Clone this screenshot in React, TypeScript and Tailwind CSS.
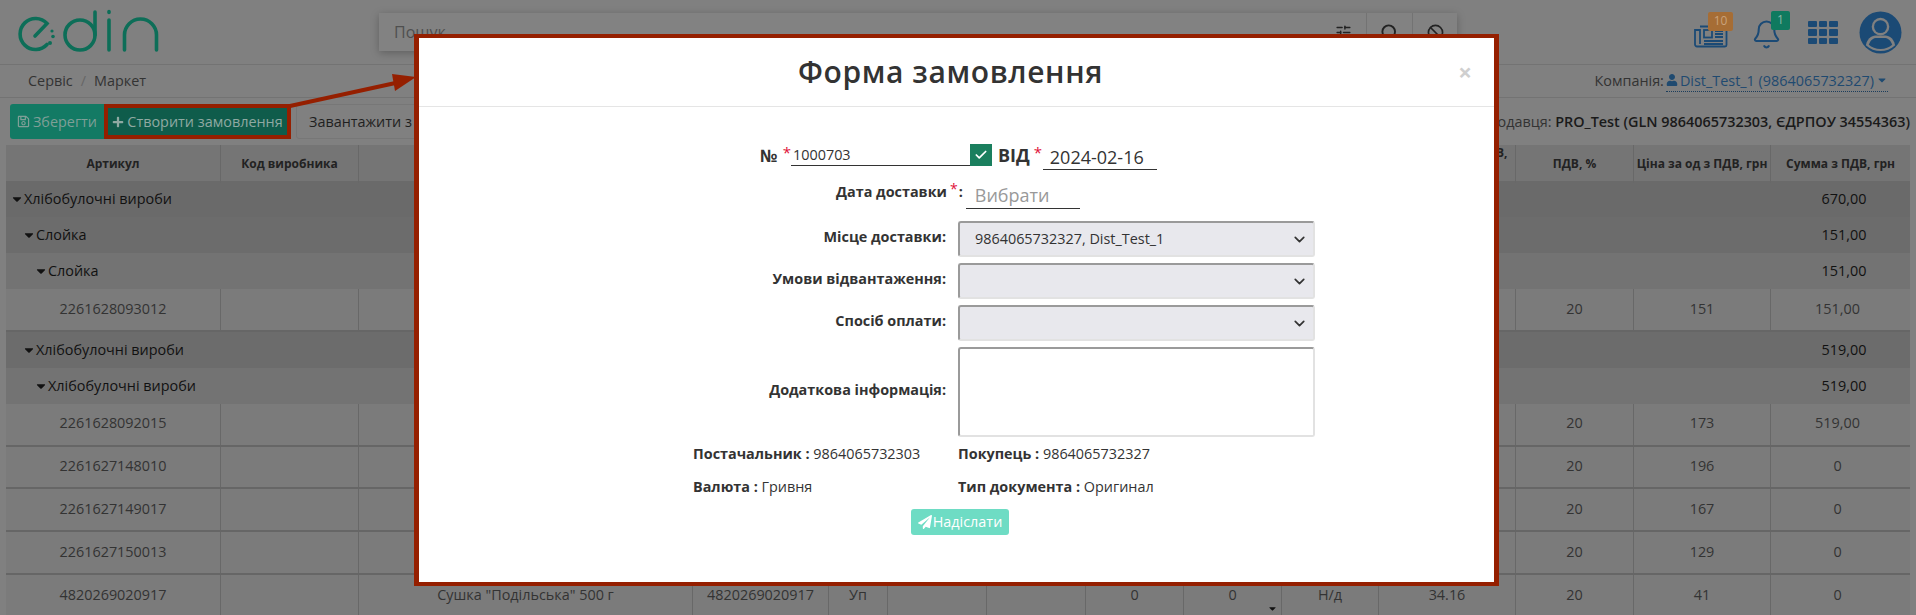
import { Ban, Bell, Check, ChevronDown, Search, SlidersHorizontal } from "lucide-react";
import { FaCaretDown, FaPaperPlane, FaPlus, FaRegSave, FaUser } from "react-icons/fa";
import type { ReactNode } from "react";

const columns = "grid grid-cols-[215px_138px_334px_136px_59px_99px_99px_98px_98px_97px_137px_118px_137px_139px]";

const headers = [
  "Артикул",
  "Код виробника",
  "Найменування",
  "Штрихкод",
  "Од",
  "",
  "",
  "",
  "",
  "",
  "Ціна за од без ПДВ, грн",
  "ПДВ, %",
  "Ціна за од з ПДВ, грн",
  "Сумма з ПДВ, грн",
];

type Row =
  | { kind: "group"; level: 0 | 1 | 2; title: string; total: string }
  | { kind: "data"; code: string; name: string; price: string; priceVat: string; sum: string };

const rows: Row[] = [
  { kind: "group", level: 0, title: "Хлібобулочні вироби", total: "670,00" },
  { kind: "group", level: 1, title: "Слойка", total: "151,00" },
  { kind: "group", level: 2, title: "Слойка", total: "151,00" },
  { kind: "data", code: "2261628093012", name: "", price: "", priceVat: "151", sum: "151,00" },
  { kind: "group", level: 1, title: "Хлібобулочні вироби", total: "519,00" },
  { kind: "group", level: 2, title: "Хлібобулочні вироби", total: "519,00" },
  { kind: "data", code: "2261628092015", name: "", price: "", priceVat: "173", sum: "519,00" },
  { kind: "data", code: "2261627148010", name: "Сухарі Пшеничні 300 г", price: "", priceVat: "196", sum: "0" },
  { kind: "data", code: "2261627149017", name: "", price: "", priceVat: "167", sum: "0" },
  { kind: "data", code: "2261627150013", name: "", price: "", priceVat: "129", sum: "0" },
  { kind: "data", code: "4820269020917", name: 'Сушка "Подільська" 500 г', price: "34.16", priceVat: "41", sum: "0" },
];

function Logo() {
  return (
    <svg viewBox="15 8 146 48" className="h-12 w-[146px]" fill="none" stroke="#0d6e58" strokeWidth="3.6" strokeLinecap="round">
      <path d="M35 36 L47 23.5 A15.5 15.5 0 1 0 47 44.5" />
      <circle cx="52" cy="31" r="1.6" fill="#0d6e58" stroke="none" />
      <circle cx="53" cy="36.5" r="1.8" fill="#0d6e58" stroke="none" />
      <circle cx="50" cy="43" r="2" fill="#0d6e58" stroke="none" />
      <circle cx="80" cy="35" r="15" />
      <path d="M95 12 V35" />
      <path d="M109 11.5 V12.5 M109 20 V50" />
      <path d="M124.5 50 V35 A16 16 0 0 1 156.5 35 V50" />
    </svg>
  );
}

function NewspaperIcon() {
  return (
    <svg viewBox="0 0 34 23" className="h-[23px] w-[34px]" fill="none" stroke="#1b4a75" strokeWidth="1.8">
      <path d="M6 1.5 H32.5 V20 A1.5 1.5 0 0 1 31 21.5 H3 A2 2 0 0 1 1 19.5 V5 H6 V19" />
      <rect x="10" y="5" width="8" height="7.5" />
      <path d="M21 6 H29 M21 9 H29 M21 12 H29 M10 16 H29 M10 19 H29" />
    </svg>
  );
}

function GridIcon() {
  return (
    <div className="grid grid-cols-3 gap-[2px]">
      {Array.from({ length: 9 }).map((_, i) => (
        <div key={i} className="h-[6.5px] w-[8.5px] rounded-[1px] bg-[#1b4a75]" />
      ))}
    </div>
  );
}

function Avatar() {
  return (
    <svg viewBox="0 0 44 44" className="h-[43px] w-[43px]">
      <circle cx="22" cy="22" r="21.5" fill="#1b4a75" />
      <circle cx="22" cy="16" r="9" fill="#808080" />
      <circle cx="22" cy="16" r="6.6" fill="#1b4a75" />
      <path d="M7 35 C9 26 15 25 18 25 H26 C29 25 35 26 37 35 C33 39 27 41 22 41 C17 41 11 39 7 35 Z" fill="#808080" />
      <path d="M10 34.5 C12 29 15 27.5 18 27.5 H26 C29 27.5 32 29 34 34.5 C31 37 27 39 22 39 C17 39 13 37 10 34.5 Z" fill="#1b4a75" />
    </svg>
  );
}

function TopBar() {
  return (
    <div className="flex h-[65px] items-center border-b border-[#737373] pl-[15px]">
      <Logo />
      <div className="ml-[218px] flex h-[38px] w-[1078px] self-start mt-[13px] items-center bg-[#828282] shadow-[0_2px_8px_rgba(0,0,0,0.25)]">
        <span className="flex-1 pl-[15px] text-[16px] text-[#4f4f4f]">Пошук</span>
        <div className="flex h-full w-[46px] items-center justify-center">
          <SlidersHorizontal size={17} className="text-[#222]" />
        </div>
        <div className="flex h-full w-[46px] items-center justify-center border-l border-[#737373]">
          <Search size={19} strokeWidth={2.4} className="text-[#222]" />
        </div>
        <div className="flex h-full w-[45px] items-center justify-center border-l border-[#737373]">
          <Ban size={17} strokeWidth={2.4} className="text-[#222]" />
        </div>
      </div>
      <div className="relative ml-[237px] mt-[8px]">
        <NewspaperIcon />
        <span className="absolute left-[14px] top-[-13px] flex h-[19px] w-[25px] items-center justify-center rounded-[2px] bg-[#a66d35] text-[12px] text-[#c9a27c]">
          10
        </span>
      </div>
      <div className="relative ml-[23px] mt-[4px]">
        <Bell size={31} strokeWidth={1.6} className="text-[#1b4a75]" />
        <span className="absolute left-[20px] top-[-8px] flex h-[19px] w-[19px] items-center justify-center rounded-[2px] bg-[#0f7a5f] text-[12px] text-[#8db8a8]">
          1
        </span>
      </div>
      <div className="ml-[26px] mt-[1px]">
        <GridIcon />
      </div>
      <div className="ml-[21px]">
        <Avatar />
      </div>
    </div>
  );
}

function Breadcrumbs() {
  return (
    <div className="flex h-[33px] items-center justify-between border-b border-[#737373] pl-[28px] pr-[28px] text-[14.4px] text-[#333]">
      <div className="flex items-center">
        <span>Сервіс</span>
        <span className="mx-[8px] text-[#666]">/</span>
        <span>Маркет</span>
      </div>
      <div className="flex items-center">
        <span>Компанія:</span>
        <span className="ml-[2px] flex items-center border-b border-dotted border-[#1b3d5c] text-[#1f4a70]">
          <FaUser size={12} className="mr-[2px]" />
          Dist_Test_1 (9864065732327)
          <FaCaretDown size={12} className="ml-[2px]" />
        </span>
      </div>
    </div>
  );
}

function Toolbar() {
  return (
    <div className="mt-[6px] flex h-[35px] items-center pl-[10px] pr-[6px] text-[14.4px]">
      <button className="flex h-full w-[94px] items-center justify-center gap-[3px] rounded-l-[3px] bg-[#137a64] text-[#7f9f97]">
        <FaRegSave size={13} />
        Зберегти
      </button>
      <button className="flex h-full w-[187px] items-center justify-center gap-[3px] border-[4px] border-[#951f00] bg-[#0f5c4b] text-[#8fa9a2]">
        <FaPlus size={12} />
        Створити замовлення
      </button>
      <button className="ml-[5px] flex h-full w-[200px] items-center rounded-[3px] border border-[#777] px-3 text-[#1f1f1f]">
        Завантажити з Excel
      </button>
      <div className="ml-auto text-[#333]">
        Договір Продавця: <span className="font-semibold text-[#1a1a1a]">PRO_Test (GLN 9864065732303, ЄДРПОУ 34554363)</span>
      </div>
    </div>
  );
}

function GroupRow({ level, title, total }: { level: 0 | 1 | 2; title: string; total: string }) {
  const styles = {
    0: "h-[36px] bg-[#6a6a6a] pl-[4px]",
    1: "h-[36px] bg-[#6c6c6c] pl-[16px]",
    2: "h-[36px] bg-[#737373] pl-[28px]",
  };
  return (
    <div className={`flex items-center text-[14.4px] text-[#111] ${styles[level]}`}>
      <FaCaretDown size={14} />
      <span className="flex-1">{title}</span>
      <span className="w-[139px] pl-[7px] text-center">{total}</span>
    </div>
  );
}

function DataRow({ code, name, price, priceVat, sum, last }: { code: string; name: string; price: string; priceVat: string; sum: string; last: boolean }) {
  const cells: ReactNode[] = [
    code,
    "",
    name,
    last ? code : "",
    last ? "Уп" : "",
    "",
    "",
    last ? "0" : "",
    last ? (
      <>
        0
        <FaCaretDown size={11} className="absolute bottom-[2px] right-[3px] text-[#111]" />
      </>
    ) : (
      ""
    ),
    last ? "Н/д" : "",
    price,
    "20",
    priceVat,
    sum,
  ];
  return (
    <div className={`${columns} h-[42.8px] border-b-2 border-[#666] bg-[#7b7b7b] text-[14.4px] text-[#333]`}>
      {cells.map((cell, i) => (
        <div key={i} className={`relative flex items-center justify-center whitespace-nowrap border-r border-[#686868] pb-[2px] last:border-r-0 ${i === 13 ? "pr-[6px]" : ""}`}>
          {cell}
        </div>
      ))}
    </div>
  );
}

function OrdersTable() {
  return (
    <div className="ml-[6px] mr-[6px] mt-[6px]">
      <div className={`${columns} h-[36px] bg-[#757575] text-[12px] font-bold text-[#222]`}>
        {headers.map((h, i) => (
          <div key={i} className={`flex items-center justify-center border-r border-[#686868] text-center leading-[16px] last:border-r-0 ${i === 10 ? "pb-[6px]" : "whitespace-nowrap"}`}>
            {h}
          </div>
        ))}
      </div>
      {rows.map((row, i) =>
        row.kind === "group" ? (
          <GroupRow key={i} level={row.level} title={row.title} total={row.total} />
        ) : (
          <DataRow key={i} code={row.code} name={row.name} price={row.price} priceVat={row.priceVat} sum={row.sum} last={i === rows.length - 1} />
        ),
      )}
    </div>
  );
}

function Star({ className }: { className: string }) {
  return <span className={`text-[#e0103a] ${className}`}>*</span>;
}

function SelectBox({ value }: { value?: string }) {
  return (
    <div className="flex h-[36px] items-center justify-between rounded-[3px] border-2 border-b-[#e2e2e2] border-l-[#9a9a9a] border-r-[#e2e2e2] border-t-[#9a9a9a] bg-[#e8e8ed] pl-[15px] pr-[5px] text-[14.4px] text-[#333]">
      <span>{value}</span>
      <ChevronDown size={17} strokeWidth={2.4} className="text-[#333]" />
    </div>
  );
}

function FieldLabel({ children }: { children: ReactNode }) {
  return <div className="flex items-center justify-end pb-[4px] text-[14.4px] font-bold text-[#333]">{children}</div>;
}

function OrderModal() {
  return (
    <div className="absolute left-[414px] top-[34px] flex h-[552px] w-[1085px] flex-col border-[4px] border-x-[5px] border-[#951f00] bg-white text-[#333]">
      <div className="relative flex h-[69px] items-center justify-center border-b border-[#e5e5e5] pb-[2px] pr-[12px]">
        <h2 className="text-[30px] font-semibold tracking-[0.6px] text-[#333]">Форма замовлення</h2>
        <span className="absolute right-[22px] top-[17px] text-[24px] font-bold leading-[34px] text-[#cfcfcf]">×</span>
      </div>

      <div className="ml-[274px] w-[622px] pt-[37px]">
        <div className="flex h-[26px] items-start pl-[67px]">
          <div className="flex w-[31px] items-start justify-between">
            <span className="mt-[1px] text-[17px] font-bold leading-[22px]">№</span>
            <Star className="mt-[-3px] text-[15px]" />
          </div>
          <input
            readOnly
            value="1000703"
            className="h-[22px] w-[179px] border-b border-[#333] pl-[2px] text-[14.4px] text-[#333] outline-none"
          />
          <span className="flex h-[22px] w-[22px] items-center justify-center bg-[#1a7f5e]">
            <Check size={14} strokeWidth={3} className="text-white" />
          </span>
          <span className="ml-[6px] text-[18px] font-bold leading-[22px]">ВІД</span>
          <Star className="ml-[4px] mt-[-3px] w-[9px] text-[15px]" />
          <input
            readOnly
            value="2024-02-16"
            className="h-[26px] w-[114px] border-b border-[#333] pl-[7px] pt-[2px] text-[18px] text-[#333] outline-none"
          />
        </div>

        <div className="mt-[12px] flex h-[27px] items-start pl-[143px]">
          <span className="text-[14.4px] font-bold leading-[20px]">Дата доставки</span>
          <Star className="ml-[3px] mt-[-4px] text-[14px]" />
          <span className="ml-[1px] text-[14.4px] font-bold leading-[20px]">:</span>
          <input
            readOnly
            placeholder="Вибрати"
            className="ml-[3px] h-[27px] w-[114px] border-b border-[#333] pl-[9px] text-[18px] outline-none placeholder:text-[#999]"
          />
        </div>

        <div className="mt-[12px] grid grid-cols-[253px_357px] gap-x-3 gap-y-[6px]">
          <FieldLabel>Місце доставки:</FieldLabel>
          <SelectBox value="9864065732327, Dist_Test_1" />
          <FieldLabel>Умови відвантаження:</FieldLabel>
          <SelectBox />
          <FieldLabel>Спосіб оплати:</FieldLabel>
          <SelectBox />
          <FieldLabel>Додаткова інформація:</FieldLabel>
          <div className="h-[90px] rounded-[3px] border-2 border-b-[#e2e2e2] border-l-[#9a9a9a] border-r-[#e2e2e2] border-t-[#9a9a9a] bg-white" />
        </div>

        <div className="mt-[7px] grid grid-cols-[265px_357px] gap-y-[13px] text-[14.4px] leading-[20px] text-[#333]">
          <div>
            <b>Постачальник :</b> 9864065732303
          </div>
          <div>
            <b>Покупець :</b> 9864065732327
          </div>
          <div>
            <b>Валюта :</b> Гривня
          </div>
          <div>
            <b>Тип документа :</b> Оригинал
          </div>
        </div>
      </div>

      <div className="ml-[492px] mt-[12px]">
        <button className="flex h-[26px] w-[98px] items-center justify-center gap-[1px] rounded-[3px] bg-[#6edcc4] text-[14.4px] text-white">
          <FaPaperPlane size={14} />
          Надіслати
        </button>
      </div>
    </div>
  );
}

export default function App() {
  return (
    <div className="relative h-[615px] w-[1916px] overflow-hidden bg-[#808080] font-['Open_Sans',sans-serif]">
      <TopBar />
      <Breadcrumbs />
      <Toolbar />
      <OrdersTable />

      {/* Red annotation arrow from the button to the form */}
      <svg className="absolute left-0 top-0 h-[615px] w-[1916px]" viewBox="0 0 1916 615">
        <path d="M290 106 L400 82" stroke="#951f00" strokeWidth="4" fill="none" />
        <path d="M416 77 L392 74 L395 91 Z" fill="#951f00" />
      </svg>

      <OrderModal />
    </div>
  );
}
